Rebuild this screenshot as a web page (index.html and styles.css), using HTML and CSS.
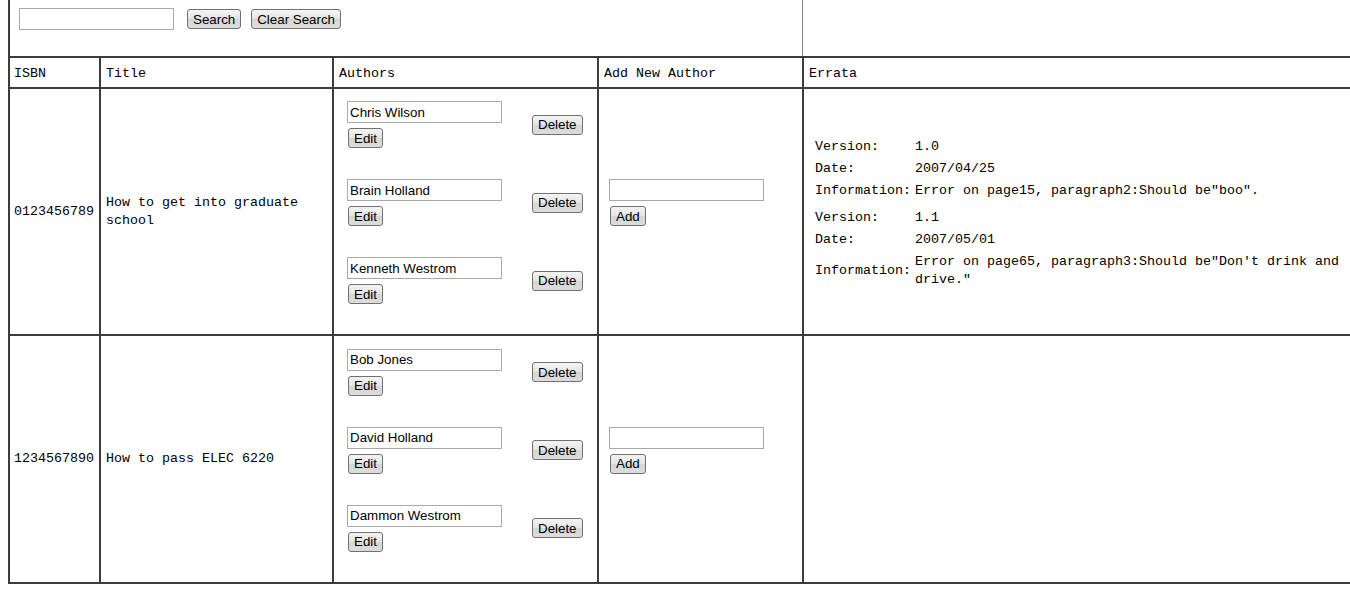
FILE: index.html
```html
<!DOCTYPE html>
<html>
<head>
<meta charset="utf-8">
<title>Books</title>
<link rel="stylesheet" href="styles.css">
</head>
<body>
<div class="page">
  <div class="top">
    <div class="search">
      <input class="field" type="text">
      <button class="btn search-btn">Search</button>
      <button class="btn">Clear Search</button>
    </div>
  </div>
  <table class="books">
    <colgroup>
      <col class="c-isbn"><col class="c-title"><col class="c-authors"><col class="c-add"><col class="c-errata">
    </colgroup>
    <tr class="head">
      <td class="first">ISBN</td><td>Title</td><td>Authors</td><td>Add New Author</td><td>Errata</td>
    </tr>
    <tr class="row">
      <td class="first">0123456789</td>
      <td>How to get into graduate school</td>
      <td class="authors">
        <div class="alist">
          <div class="author"><div class="acol"><input class="field" type="text" value="Chris Wilson"><button class="btn">Edit</button></div><button class="btn">Delete</button></div>
          <div class="author"><div class="acol"><input class="field" type="text" value="Brain Holland"><button class="btn">Edit</button></div><button class="btn">Delete</button></div>
          <div class="author"><div class="acol"><input class="field" type="text" value="Kenneth Westrom"><button class="btn">Edit</button></div><button class="btn">Delete</button></div>
        </div>
      </td>
      <td class="add">
        <div class="addbox"><input class="field" type="text"><button class="btn">Add</button></div>
      </td>
      <td class="errata">
        <div class="entry">
          <span class="lbl">Version:</span><span class="val">1.0</span>
          <span class="lbl">Date:</span><span class="val">2007/04/25</span>
          <span class="lbl">Information:</span><span class="val">Error on page15, paragraph2:Should be″boo″.</span>
        </div>
        <div class="entry">
          <span class="lbl">Version:</span><span class="val">1.1</span>
          <span class="lbl">Date:</span><span class="val">2007/05/01</span>
          <span class="lbl">Information:</span><span class="val">Error on page65, paragraph3:Should be″Don′t drink and drive.″</span>
        </div>
      </td>
    </tr>
    <tr class="row row2">
      <td class="first">1234567890</td>
      <td>How to pass ELEC 6220</td>
      <td class="authors">
        <div class="alist">
          <div class="author"><div class="acol"><input class="field" type="text" value="Bob Jones"><button class="btn">Edit</button></div><button class="btn">Delete</button></div>
          <div class="author"><div class="acol"><input class="field" type="text" value="David Holland"><button class="btn">Edit</button></div><button class="btn">Delete</button></div>
          <div class="author"><div class="acol"><input class="field" type="text" value="Dammon Westrom"><button class="btn">Edit</button></div><button class="btn">Delete</button></div>
        </div>
      </td>
      <td class="add">
        <div class="addbox"><input class="field" type="text"><button class="btn">Add</button></div>
      </td>
      <td class="errata"></td>
    </tr>
  </table>
</div>
</body>
</html>
```

FILE: styles.css
```css
html, body {
  margin: 0;
  padding: 0;
  background: #fff;
}
body {
  padding-left: 8px;
  overflow: hidden;
}
.page {
  width: 1400px;
  font-family: "Liberation Mono", "DejaVu Sans Mono", monospace;
  font-size: 13.33px;
  color: #000;
}
.top {
  display: flex;
  height: 56px;
}
.search {
  box-sizing: border-box;
  width: 795px;
  height: 56px;
  border-left: 2px solid #3c3c3c;
  border-right: 1px solid #8a8a8a;
  padding: 8px 0 0 9px;
  display: flex;
  align-items: flex-start;
}
.search .field {
  margin-right: 13px;
}
.search .btn {
  margin-top: 1px;
  margin-right: 10px;
}
.field {
  box-sizing: border-box;
  width: 155px;
  height: 22px;
  border: 1px solid #a9a9a9;
  padding: 0 2px;
  margin: 0;
  font-family: "Liberation Sans", Arial, sans-serif;
  font-size: 13.33px;
  color: #000;
  background: #fff;
  outline: none;
}
.btn {
  box-sizing: border-box;
  height: 20px;
  padding: 0 5px;
  margin: 0;
  border: 1px solid #707070;
  border-radius: 3px;
  background: linear-gradient(#f4f4f4, #e4e4e4 50%, #d6d6d6 51%, #dcdcdc);
  font-family: "Liberation Sans", Arial, sans-serif;
  font-size: 13.33px;
  color: #000;
  line-height: 17px;
}
.books {
  border-collapse: separate;
  border-spacing: 0;
  table-layout: fixed;
  width: 1356px;
  border-top: 2px solid #3c3c3c;
  border-left: 2px solid #3c3c3c;
}
.books td {
  border-right: 2px solid #3c3c3c;
  border-bottom: 2px solid #3c3c3c;
  padding: 0 4px 0 5px;
  vertical-align: middle;
  line-height: 18px;
}
.books td.first {
  padding-left: 4px;
}
.c-isbn { width: 91px; }
.c-title { width: 233px; }
.c-authors { width: 265px; }
.c-add { width: 205px; }
.c-errata { width: 562px; }
.head { height: 31px; }
.head td { padding-top: 2px; }
.row { height: 247px; }
.row2 { height: 248px; }
.books td.authors {
  padding: 0 0 0 13px;
}
.alist {
  display: flex;
  flex-direction: column;
  gap: 31px;
  padding-bottom: 18px;
}
.author {
  display: flex;
  align-items: center;
  gap: 30px;
}
.acol {
  display: flex;
  flex-direction: column;
  align-items: flex-start;
  gap: 5px;
}
.acol .btn {
  margin-left: 1px;
}
.books td.add {
  padding: 0 0 0 10px;
}
.addbox {
  display: flex;
  flex-direction: column;
  align-items: flex-start;
  gap: 5px;
  padding-bottom: 18px;
}
.addbox .btn {
  margin-left: 1px;
}
.books td.errata {
  padding: 4px 8px 0 11px;
}
.entry {
  display: grid;
  grid-template-columns: 100px 1fr;
  row-gap: 4px;
  align-items: center;
}
.entry + .entry {
  margin-top: 9px;
}
.lbl, .val {
  line-height: 18px;
}
```
